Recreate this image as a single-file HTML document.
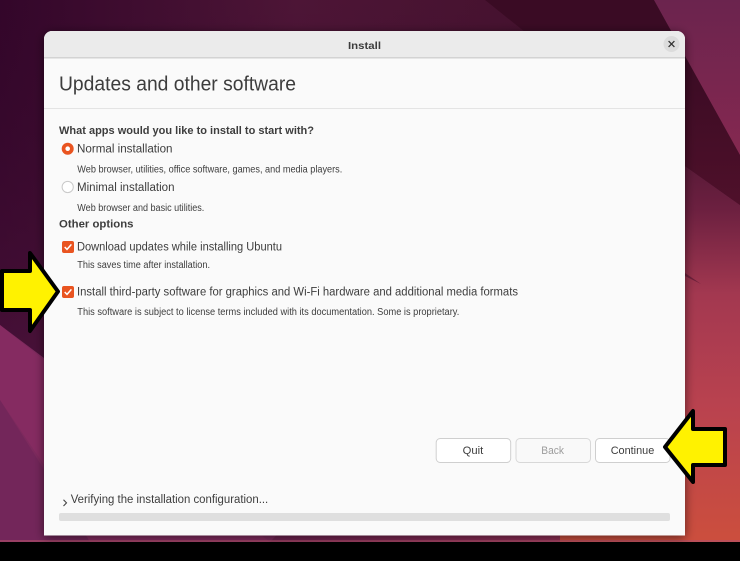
<!DOCTYPE html>
<html><head><meta charset="utf-8"><title>Install</title>
<style>
html,body{margin:0;padding:0;background:#000;width:740px;height:561px;overflow:hidden}
svg{display:block}
text{font-family:"Liberation Sans",sans-serif;fill:#3d3d3d}
</style></head><body>
<svg width="740" height="561" viewBox="0 0 740 561" xmlns="http://www.w3.org/2000/svg">
<defs>
<linearGradient id="top" x1="0" y1="0" x2="1" y2="0">
<stop offset="0" stop-color="#33062a"/><stop offset=".4" stop-color="#4d1536"/><stop offset=".7" stop-color="#46122f"/><stop offset="1" stop-color="#3f0d28"/>
</linearGradient>
<linearGradient id="vleft" x1="0" y1="0" x2="0" y2="1">
<stop offset="0" stop-color="#3a0a2e" stop-opacity="0"/><stop offset="1" stop-color="#5c1b46"/>
</linearGradient>
<linearGradient id="tr" x1="0" y1="0" x2="0" y2="1">
<stop offset="0" stop-color="#6b244e"/><stop offset="1" stop-color="#852850"/>
</linearGradient>
<linearGradient id="dk" gradientUnits="userSpaceOnUse" x1="0" y1="60" x2="0" y2="205">
<stop offset="0" stop-color="#3a0b24"/><stop offset="1" stop-color="#4f102a"/>
</linearGradient>
<linearGradient id="rb" gradientUnits="userSpaceOnUse" x1="0" y1="165" x2="0" y2="535">
<stop offset="0" stop-color="#5a1a38"/><stop offset=".12" stop-color="#6c2040"/><stop offset=".35" stop-color="#a33850"/><stop offset=".65" stop-color="#b9424f"/><stop offset="1" stop-color="#cb4e3e"/>
</linearGradient>
<linearGradient id="bot" x1="0" y1="0" x2="1" y2="0">
<stop offset="0" stop-color="#6d2150"/><stop offset=".6" stop-color="#8f2e55"/><stop offset="1" stop-color="#cb4e3e"/>
</linearGradient>
<filter id="sh" x="-10%" y="-10%" width="120%" height="120%"><feDropShadow dx="0" dy="2" stdDeviation="5" flood-color="#000" flood-opacity=".55"/></filter>
</defs>

<!-- wallpaper -->
<rect width="740" height="542" fill="url(#top)"/>
<rect width="740" height="542" fill="url(#vleft)"/>
<polygon points="0,325 100,400 300,542 0,542" fill="#7c2a5d"/>
<polygon points="0,400 44,465 90,542 270,542 44,360 0,325" fill="#852b61"/>
<polygon points="0,400 90,542 0,542" fill="#73265a"/>
<polygon points="270,542 740,542 740,300 500,300" fill="url(#bot)"/>
<polygon points="620,120 740,205 740,542 560,542 560,120" fill="url(#rb)"/>
<polygon points="485,0 654,0 740,155 740,205 620,120 560,60" fill="url(#dk)"/>
<polygon points="654,0 740,0 740,155" fill="url(#tr)"/>
<polygon points="685,273 701,284 685,276" fill="#6b1f3a"/>
<rect x="0" y="540" width="740" height="2" fill="#b0506a" opacity=".6"/>
<rect x="0" y="542" width="740" height="19" fill="#000"/>

<!-- window -->
<path d="M44 535.5V39a8 8 0 0 1 8-8H677a8 8 0 0 1 8 8V535.5Z" fill="#fafafa" filter="url(#sh)"/>
<path d="M44 57V39a8 8 0 0 1 8-8H677a8 8 0 0 1 8 8V57Z" fill="#ebebeb"/>
<rect x="44" y="57" width="641" height="1.5" fill="#d3d3d3"/>
<rect x="44" y="108" width="641" height="1" fill="#e4e4e4"/>
<text x="348" y="49" font-size="10.5" font-weight="700" textLength="33" lengthAdjust="spacingAndGlyphs">Install</text>
<circle cx="671.5" cy="44" r="8" fill="#dcdcdc"/>
<path d="M668.6 41.1l5.8 5.8M674.4 41.1l-5.8 5.8" stroke="#333" stroke-width="1.3" fill="none"/>

<text x="59" y="90.7" font-size="20.5" textLength="237" lengthAdjust="spacingAndGlyphs">Updates and other software</text>
<text x="59" y="134" font-size="11" font-weight="700" textLength="255" lengthAdjust="spacingAndGlyphs">What apps would you like to install to start with?</text>

<circle cx="67.7" cy="148.7" r="6" fill="#e95420"/>
<circle cx="67.7" cy="148.7" r="2.3" fill="#fff"/>
<text x="77" y="152.6" font-size="11.5" textLength="95.5" lengthAdjust="spacingAndGlyphs">Normal installation</text>
<text x="77.3" y="172.7" font-size="10" textLength="265" lengthAdjust="spacingAndGlyphs">Web browser, utilities, office software, games, and media players.</text>

<circle cx="67.7" cy="187" r="5.6" fill="#fff" stroke="#c9c9c9"/>
<text x="77" y="190.8" font-size="11.5" textLength="97.5" lengthAdjust="spacingAndGlyphs">Minimal installation</text>
<text x="77.3" y="211" font-size="10" textLength="127" lengthAdjust="spacingAndGlyphs">Web browser and basic utilities.</text>

<text x="59" y="227.5" font-size="11" font-weight="700" textLength="74.5" lengthAdjust="spacingAndGlyphs">Other options</text>

<rect x="62" y="241" width="12" height="12" rx="2" fill="#e95420"/>
<path d="M64.7 247l2.3 2.4 4.4-5" stroke="#fff" stroke-width="1.5" fill="none"/>
<text x="77" y="250.7" font-size="11.5" textLength="205" lengthAdjust="spacingAndGlyphs">Download updates while installing Ubuntu</text>
<text x="77.3" y="268" font-size="10" textLength="132.7" lengthAdjust="spacingAndGlyphs">This saves time after installation.</text>

<rect x="62" y="286" width="12" height="12" rx="2" fill="#e95420"/>
<path d="M64.7 292l2.3 2.4 4.4-5" stroke="#fff" stroke-width="1.5" fill="none"/>
<text x="77" y="295.7" font-size="11.5" textLength="441" lengthAdjust="spacingAndGlyphs">Install third-party software for graphics and Wi-Fi hardware and additional media formats</text>
<text x="77.3" y="315" font-size="10" textLength="382" lengthAdjust="spacingAndGlyphs">This software is subject to license terms included with its documentation. Some is proprietary.</text>

<!-- buttons -->
<rect x="436.2" y="438.5" width="74.5" height="24" rx="4" fill="#fff" stroke="#cfcfcf"/>
<rect x="516" y="438.5" width="74.5" height="24" rx="4" fill="#f9f9f9" stroke="#d8d8d8"/>
<rect x="595.5" y="438.5" width="74.5" height="24" rx="4" fill="#fff" stroke="#cfcfcf"/>
<text x="462.7" y="454" font-size="11" textLength="20.6" lengthAdjust="spacingAndGlyphs">Quit</text>
<text x="541.3" y="454" font-size="11" textLength="22.7" lengthAdjust="spacingAndGlyphs" style="fill:#9c9c9c">Back</text>
<text x="610.7" y="454" font-size="11" textLength="43.6" lengthAdjust="spacingAndGlyphs">Continue</text>

<!-- progress -->
<path d="M63.5 499.8l3 3.1-3 3.1" stroke="#444" stroke-width="1.1" fill="none"/>
<text x="70.7" y="503" font-size="11.5" textLength="197.5" lengthAdjust="spacingAndGlyphs">Verifying the installation configuration...</text>
<rect x="59" y="513" width="611" height="8" rx="2" fill="#dfdfdf"/>

<!-- arrows -->
<polygon points="2,271 30,271 30,253 58,291.5 30,331 30,310 2,310" fill="#fff200" stroke="#000" stroke-width="4" stroke-linejoin="round"/>
<polygon points="665,447 693,411 693,429 725,429 725,465 693,465 693,482" fill="#fff200" stroke="#000" stroke-width="4" stroke-linejoin="round"/>
</svg>
</body></html>
